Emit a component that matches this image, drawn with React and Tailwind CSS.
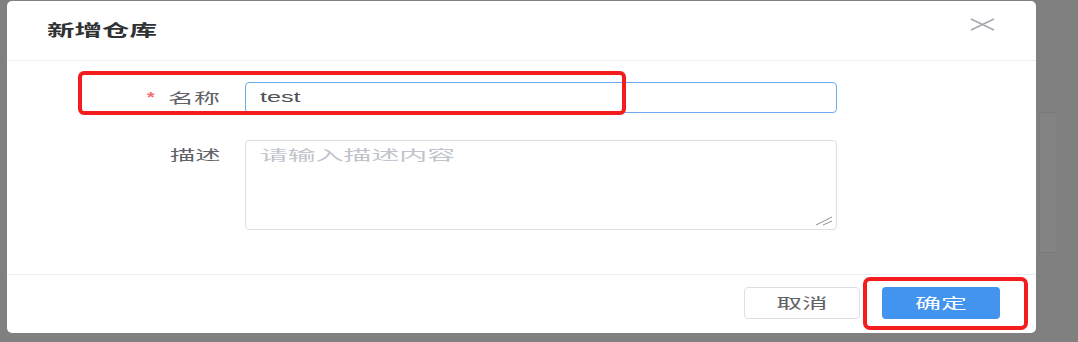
export default function App() {
  return (
    <div
      className="relative flex h-[342px] w-[1078px] overflow-hidden bg-[#808080] pl-[7px] pt-[1px]"
      style={{ fontFamily: '"Liberation Sans", "Noto Sans CJK SC", sans-serif' }}
    >
      {/* dialog */}
      <div className="flex h-[332px] w-[1029px] flex-col rounded-[5px] bg-white">
        <div className="flex h-[60px] justify-between border-b border-[#ebeef5] pl-[40px] pr-[41px]">
          <span className="inline-block w-[110px] self-center">
            <span className="inline-block origin-left scale-x-[1.72] whitespace-nowrap text-[16px] font-bold text-[#303133]">
              新增仓库
            </span>
          </span>
          <svg className="mt-[17px]" width="25" height="13" viewBox="0 0 25 13">
            <path d="M1 1L24 12M24 1L1 12" stroke="#a3a6ad" strokeWidth="1.4" fill="none" />
          </svg>
        </div>

        <div className="flex flex-col gap-[27px] pb-[44px] pt-[21px]">
          <div className="flex items-center gap-[25px]">
            <div className="flex w-[213px] items-center justify-end">
              <span className="mr-[14px] inline-block origin-center scale-x-[1.3] text-[15px] font-bold text-[#f56c6c]">*</span>
              <span className="inline-block w-[52px]">
                <span className="inline-block origin-left scale-x-[1.85] whitespace-nowrap text-[14px] text-[#606266]">
                  名称
                </span>
              </span>
            </div>
            <div className="flex h-[31px] w-[592px] items-center rounded-[4px] border border-[#70aaee] pl-[14px]">
              <span className="inline-block origin-left scale-x-[1.8] text-[14px] text-[#505256]">test</span>
            </div>
          </div>

          <div className="flex items-start gap-[25px]">
            <div className="flex w-[213px] justify-end pt-[5px] leading-[20px]">
              <span className="inline-block w-[50px]">
                <span className="inline-block origin-left scale-x-[1.8] whitespace-nowrap text-[14px] text-[#606266]">
                  描述
                </span>
              </span>
            </div>
            <div className="relative h-[90px] w-[592px] rounded-[4px] border border-[#dcdfe6] pl-[14px] pt-[4px] leading-[20px]">
              <span className="inline-block origin-left scale-x-[1.99] whitespace-nowrap text-[14px] text-[#c0c4cc]">
                请输入描述内容
              </span>
              <svg className="absolute bottom-[3px] right-[3px]" width="18" height="10" viewBox="0 0 18 10">
                <path d="M1 9L17 1M8 9L17 5" stroke="#8d8f93" strokeWidth="1" fill="none" />
              </svg>
            </div>
          </div>
        </div>

        <div className="flex flex-1 justify-end gap-[22px] border-t border-[#ebeef5] pr-[36px] pt-[12px]">
          <button className="flex h-[32px] w-[116px] items-center justify-center rounded-[4px] border border-[#dcdfe6] bg-white">
            <span className="inline-block origin-center scale-x-[1.82] whitespace-nowrap text-[14px] text-[#606266]">
              取消
            </span>
          </button>
          <button className="flex h-[32px] w-[118px] items-center justify-center rounded-[4px] bg-[#4394ee]">
            <span className="inline-block origin-center scale-x-[1.85] whitespace-nowrap text-[14px] text-white">
              确定
            </span>
          </button>
        </div>
      </div>

      {/* page card peeking from behind the overlay */}
      <div className="ml-[3px] mt-[111px] h-[141px] w-[17px] border border-r-0 border-[#7a7a7a] bg-[#838383]" />

      {/* red annotation boxes */}
      <div className="absolute left-[78px] top-[71px] h-[44px] w-[548px] rounded-[6px] border-[4px] border-[#f41c1c]" />
      <div className="absolute left-[863px] top-[277px] h-[53px] w-[165px] rounded-[7px] border-[4px] border-[#f41c1c]" />
    </div>
  )
}
